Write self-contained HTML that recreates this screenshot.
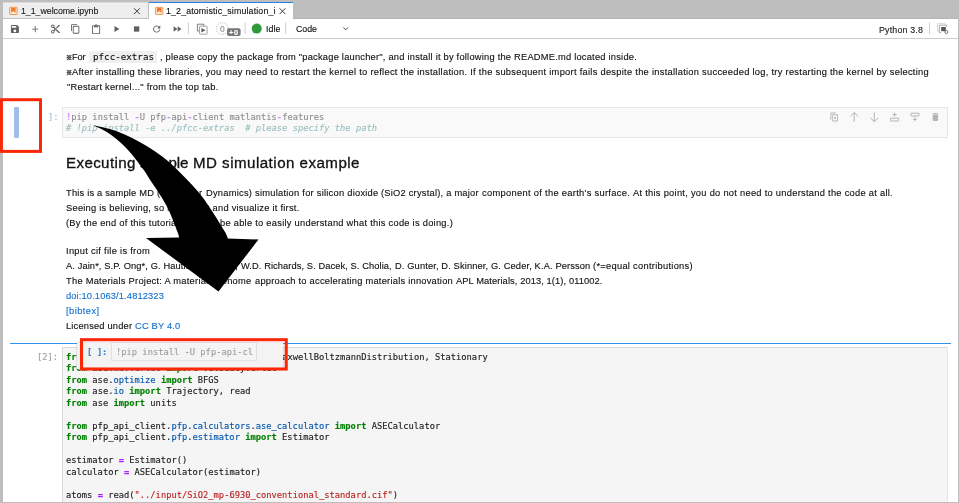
<!DOCTYPE html>
<html lang="en">
<head>
<meta charset="utf-8">
<title>JupyterLab - drag cell</title>
<style>
html,body{margin:0;padding:0;}
body{width:959px;height:503px;overflow:hidden;background:#bebebe;position:relative;font-family:"Liberation Sans",sans-serif;}
.abs{position:absolute;}
.t{position:absolute;white-space:pre;line-height:1.2;z-index:2;will-change:transform;-webkit-text-stroke:0.13px;}
.m{font-family:"DejaVu Sans Mono","Liberation Mono",monospace;}
.cj{font-family:"Liberation Sans","Noto Sans CJK JP",sans-serif;}
.k{color:#008000;font-weight:bold;}
.o{color:#aa22ff;font-weight:bold;}
.p{color:#0055aa;}
.s{color:#ba2121;}
.top{z-index:7;}
#tabbar{left:0;top:0;width:959px;height:19px;background:#bebebe;}
#tab1{left:2.8px;top:2.2px;width:145.7px;height:16px;background:#eeeeee;border-top:0.7px solid #dadada;box-sizing:border-box;}
#tab2{left:148.7px;top:2.2px;width:144.4px;height:17px;background:#fff;border-top:1.1px solid #2f7fe0;box-sizing:border-box;}
#toolbar{left:2.8px;top:18.7px;width:955.2px;height:19.2px;background:#fff;border-bottom:0.8px solid #cdcdcd;box-sizing:content-box;}
#content{left:2.8px;top:38.7px;width:955.2px;height:463.1px;background:#fff;}
</style>
</head>
<body>
<div class="abs" id="tabbar"></div>
<div class="abs" id="tab1"></div>
<div class="abs" id="tab2"></div>
<div class="abs" id="toolbar"></div>
<div class="abs" style="left:2.8px;top:18px;width:146px;height:0.8px;background:#c2c2c2;"></div>
<div class="abs" style="left:293.1px;top:17.8px;width:665px;height:0.8px;background:#b4b4b4;"></div>
<div class="abs" id="content"></div>

<!-- faded (dragged) cell -->
<div class="abs" style="left:13.5px;top:106.8px;width:5.6px;height:31.1px;background:#a0bee8;border-radius:1.2px;"></div>
<div class="abs" style="left:62.1px;top:106.9px;width:885.8px;height:30.8px;background:#f9f9f9;border:0.8px solid #e6e6e6;box-sizing:border-box;"></div>
<!-- inline code bg -->
<div class="abs" style="left:88.7px;top:51.2px;width:68.8px;height:12.2px;background:#efefef;"></div>

<!-- drop target line -->
<div class="abs" style="left:10px;top:342.8px;width:941px;height:1.3px;background:#3390f0;"></div>

<!-- code cell 2 -->
<div class="abs" style="left:62.1px;top:347px;width:885.5px;height:154.8px;background:#f5f5f5;border:0.9px solid #d8d8d8;border-bottom:none;border-right:0.7px solid #e6e6e6;box-sizing:border-box;"></div>

<!-- drag image -->
<div class="abs" style="left:76.6px;top:342.7px;width:206.5px;height:26.5px;background:#f3f3f3;z-index:5;box-shadow:0 0 1.5px rgba(0,0,0,0.3);"></div>
<div class="abs" style="left:111.2px;top:342.1px;width:145.7px;height:19.2px;background:#f4f4f4;border:0.9px solid #e0e0e0;box-sizing:border-box;z-index:6;"></div>

<div class="t" style="left:21.2px;top:6px;font-size:8.8px;color:#1a1a1a;letter-spacing:-0.0274px;">1_1_welcome.ipynb</div>
<div class="t" style="left:166.3px;top:6px;font-size:8.8px;color:#111;letter-spacing:0.1529px;">1_2_atomistic_simulation_i</div>
<div class="t" style="left:265.9px;top:24px;font-size:8.8px;color:#111;letter-spacing:0.0531px;">Idle</div>
<div class="t" style="left:296.3px;top:24px;font-size:8.8px;color:#111;letter-spacing:-0.0078px;">Code</div>
<div class="t" style="left:879.1px;top:25px;font-size:8.8px;color:#222;letter-spacing:0.1938px;">Python 3.8</div>
<div class="t" style="left:219.9px;top:24px;font-size:8.4px;color:#909090;">0</div>
<div class="t" style="left:229.0px;top:29px;font-size:7.4px;color:#fff;letter-spacing:0.7812px;font-weight:bold;">+0</div>
<div class="t cj" style="left:65.9px;top:54px;font-size:6.2px;color:#111;font-weight:bold;-webkit-text-stroke:0.3px;">※</div>
<div class="t" style="left:71.6px;top:52px;font-size:9.3px;color:#111;letter-spacing:-0.1177px;">For</div>
<div class="t m" style="left:92.7px;top:51px;font-size:9.17px;color:#111;letter-spacing:0.0327px;">pfcc-extras</div>
<div class="t" style="left:159.5px;top:52px;font-size:9.3px;color:#111;letter-spacing:0.2260px;">, please copy the package from "package launcher", and install it by following the README.md located inside.</div>
<div class="t cj" style="left:65.9px;top:69px;font-size:6.2px;color:#111;font-weight:bold;-webkit-text-stroke:0.3px;">※</div>
<div class="t" style="left:71.6px;top:67px;font-size:9.3px;color:#111;letter-spacing:0.2830px;">After installing these libraries, you may need to restart the kernel to reflect the installation. If the subsequent import fails despite the installation succeeded log, try restarting the kernel by selecting</div>
<div class="t" style="left:67.0px;top:82px;font-size:9.3px;color:#111;letter-spacing:0.2432px;">"Restart kernel..." from the top tab.</div>
<div class="t m" style="left:47.6px;top:112px;font-size:8.76px;color:#a9c1e4;letter-spacing:-0.1234px;">]:</div>
<div class="t m" style="left:66.25px;top:112px;font-size:8.76px;color:#8e8e8e;letter-spacing:0.0013px;"><span style="color:#d28cff;font-weight:bold">!</span>pip install <span style="color:#d28cff;font-weight:bold">-</span>U pfp<span style="color:#d28cff;font-weight:bold">-</span>api<span style="color:#d28cff;font-weight:bold">-</span>client matlantis<span style="color:#d28cff;font-weight:bold">-</span>features</div>
<div class="t m" style="left:66.25px;top:123px;font-size:8.76px;color:#9cc0c0;letter-spacing:0.0032px;font-style:italic;"># !pip install -e ../pfcc-extras  # please specify the path</div>
<div class="t" style="left:66.3px;top:154px;font-size:15.1px;color:#111;letter-spacing:0.3892px;-webkit-text-stroke:0.32px;">Executing</div>
<div class="t" style="left:140.3px;top:154px;font-size:15.1px;color:#111;letter-spacing:-0.0453px;-webkit-text-stroke:0.32px;">sample</div>
<div class="t" style="left:192.8px;top:154px;font-size:15.1px;color:#111;letter-spacing:0.4821px;-webkit-text-stroke:0.32px;">MD simulation example</div>
<div class="t" style="left:66.4px;top:188px;font-size:9.3px;color:#111;letter-spacing:0.2071px;">This is a sample MD (Molecular </div>
<div class="t" style="left:205.6px;top:188px;font-size:9.3px;color:#111;letter-spacing:0.2554px;">Dynamics) simulation for silicon dioxide </div>
<div class="t" style="left:380.9px;top:188px;font-size:9.3px;color:#111;letter-spacing:0.2307px;">(SiO2 crystal), a major </div>
<div class="t" style="left:481.5px;top:188px;font-size:9.3px;color:#111;letter-spacing:0.3153px;">component of the earth's surface. </div>
<div class="t" style="left:632.5px;top:188px;font-size:9.3px;color:#111;letter-spacing:0.2797px;">At this point, you do not need to understand the code at all.</div>
<div class="t" style="left:66.4px;top:203px;font-size:9.3px;color:#111;letter-spacing:0.2534px;">Seeing is believing, so let's run it and visualize it first.</div>
<div class="t" style="left:66.4px;top:218px;font-size:9.3px;color:#111;letter-spacing:0.2660px;">(By the end of this tutorial, you will be able to easily understand what this code is doing.)</div>
<div class="t" style="left:66.4px;top:246px;font-size:9.3px;color:#111;letter-spacing:0.2955px;">Input cif file is from</div>
<div class="t" style="left:66.4px;top:261px;font-size:9.3px;color:#111;letter-spacing:0.1033px;">A. Jain*, S.P. Ong*, G. Hautier, W. Chen, </div>
<div class="t" style="left:241.1px;top:261px;font-size:9.3px;color:#111;letter-spacing:0.0845px;">W.D. Richards, S. Dacek, S. Cholia, </div>
<div class="t" style="left:394.5px;top:261px;font-size:9.3px;color:#111;letter-spacing:0.1275px;">D. Gunter, D. Skinner, G. Ceder, K.A. Persson </div>
<div class="t" style="left:592.6px;top:261px;font-size:9.3px;color:#111;letter-spacing:0.2871px;">(*=equal contributions)</div>
<div class="t" style="left:66.4px;top:276px;font-size:9.3px;color:#111;letter-spacing:0.2631px;">The Materials Project: A materials genome </div>
<div class="t" style="left:254.7px;top:276px;font-size:9.3px;color:#111;letter-spacing:0.2419px;">approach to accelerating materials innovation </div>
<div class="t" style="left:455.5px;top:276px;font-size:9.3px;color:#111;letter-spacing:0.0983px;">APL Materials, 2013, 1(1), 011002.</div>
<div class="t" style="left:66.4px;top:291px;font-size:9.3px;color:#1470d0;letter-spacing:0.1362px;">doi:10.1063/1.4812323</div>
<div class="t" style="left:66.4px;top:306px;font-size:9.3px;color:#1470d0;letter-spacing:0.4395px;">[bibtex]</div>
<div class="t" style="left:66.4px;top:321px;font-size:9.3px;color:#111;letter-spacing:0.1901px;">Licensed under <span style="color:#1470d0">CC BY 4.0</span></div>
<div class="t m" style="left:36.6px;top:352px;font-size:8.76px;color:#a0a0a0;letter-spacing:0.0015px;">[2]:</div>
<div class="t m" style="left:66.25px;top:352px;font-size:8.76px;color:#1a1a1a;letter-spacing:0.0023px;"><span class="k">from</span> ase.<span class="p">md</span>.<span class="p">velocitydistribution</span> <span class="k">import</span> MaxwellBoltzmannDistribution, Stationary</div>
<div class="t m" style="left:66.25px;top:363px;font-size:8.76px;color:#1a1a1a;letter-spacing:0.0015px;"><span class="k">from</span> ase.<span class="p">md</span>.<span class="p">verlet</span> <span class="k">import</span> VelocityVerlet</div>
<div class="t m" style="left:66.25px;top:375px;font-size:8.76px;color:#1a1a1a;letter-spacing:0.0016px;"><span class="k">from</span> ase.<span class="p">optimize</span> <span class="k">import</span> BFGS</div>
<div class="t m" style="left:66.25px;top:386px;font-size:8.76px;color:#1a1a1a;letter-spacing:0.0018px;"><span class="k">from</span> ase.<span class="p">io</span> <span class="k">import</span> Trajectory, read</div>
<div class="t m" style="left:66.25px;top:398px;font-size:8.76px;color:#1a1a1a;letter-spacing:0.0024px;"><span class="k">from</span> ase <span class="k">import</span> units</div>
<div class="t m" style="left:66.25px;top:421px;font-size:8.76px;color:#1a1a1a;letter-spacing:0.0016px;"><span class="k">from</span> pfp_api_client.<span class="p">pfp</span>.<span class="p">calculators</span>.<span class="p">ase_calculator</span> <span class="k">import</span> ASECalculator</div>
<div class="t m" style="left:66.25px;top:432px;font-size:8.76px;color:#1a1a1a;letter-spacing:0.0016px;"><span class="k">from</span> pfp_api_client.<span class="p">pfp</span>.<span class="p">estimator</span> <span class="k">import</span> Estimator</div>
<div class="t m" style="left:66.25px;top:455px;font-size:8.76px;color:#1a1a1a;letter-spacing:0.0020px;">estimator <span class="o">=</span> Estimator()</div>
<div class="t m" style="left:66.25px;top:467px;font-size:8.76px;color:#1a1a1a;letter-spacing:0.0024px;">calculator <span class="o">=</span> ASECalculator(estimator)</div>
<div class="t m" style="left:66.25px;top:490px;font-size:8.76px;color:#1a1a1a;letter-spacing:0.0024px;">atoms <span class="o">=</span> read(<span class="s">"../input/SiO2_mp-6930_conventional_standard.cif"</span>)</div>
<div class="t m top" style="left:87px;top:347px;font-size:8.76px;color:#3b82c4;letter-spacing:-0.2485px;font-weight:bold;">[ ]:</div>
<div class="t m top" style="left:115.5px;top:347px;font-size:8.76px;color:#9e9e9e;letter-spacing:0.0030px;">!pip install -U pfp-api-cl</div>

<!-- icons / overlays -->
<svg class="abs" style="left:0;top:0;z-index:1;" width="959" height="503" viewBox="0 0 959 503">
<g transform="translate(9.55,23.75) scale(0.4458)" fill="#616161"><path d="M17 3H5c-1.11 0-2 .9-2 2v14c0 1.1.89 2 2 2h14c1.1 0 2-.9 2-2V7l-4-4zm-5 16c-1.66 0-3-1.34-3-3s1.34-3 3-3 3 1.34 3 3-1.34 3-3 3zm3-10H5V5h10v4z"/></g>
<g transform="translate(29.85,23.75) scale(0.4458)" fill="#616161"><path d="M19 13h-6v6h-2v-6H5v-2h6V5h2v6h6v2z"/></g>
<g transform="translate(50.15,23.65) scale(0.4458)" fill="#616161"><path d="M9.64 7.64c.23-.5.36-1.05.36-1.64 0-2.21-1.79-4-4-4S2 3.79 2 6s1.79 4 4 4c.59 0 1.14-.13 1.64-.36L10 12l-2.36 2.36C7.14 14.13 6.59 14 6 14c-2.21 0-4 1.79-4 4s1.79 4 4 4 4-1.79 4-4c0-.59-.13-1.14-.36-1.64L12 14l7 7h3v-1L9.64 7.64zM6 8c-1.1 0-2-.89-2-2s.9-2 2-2 2 .89 2 2-.9 2-2 2zm0 12c-1.1 0-2-.89-2-2s.9-2 2-2 2 .89 2 2-.9 2-2 2zm6-7.5c-.28 0-.5-.22-.5-.5s.22-.5.5-.5.5.22.5.5-.22.5-.5.5zM19 3l-6 6 2 2 7-7V3z"/></g>
<g transform="translate(70.05,23.55) scale(0.5944)" fill="#616161"><path d="M11.9,1H3.2C2.4,1,1.7,1.7,1.7,2.5v10.2h1.5V2.5h8.7V1z M14.1,3.9h-8c-0.8,0-1.5,0.7-1.5,1.5v10.2c0,0.8,0.7,1.5,1.5,1.5h8 c0.8,0,1.5-0.7,1.5-1.5V5.4C15.5,4.6,14.9,3.9,14.1,3.9z M14.1,15.5h-8V5.4h8V15.5z"/></g>
<g transform="translate(90.75,24.25) scale(0.4458)" fill="#616161"><path d="M19 2h-4.18C14.4.84 13.3 0 12 0c-1.3 0-2.4.84-2.82 2H5c-1.1 0-2 .9-2 2v16c0 1.1.9 2 2 2h14c1.1 0 2-.9 2-2V4c0-1.1-.9-2-2-2zm-7 0c.55 0 1 .45 1 1s-.45 1-1 1-1-.45-1-1 .45-1 1-1zm7 18H5V4h2v3h10V4h2v16z"/></g>
<g transform="translate(110.95,23.65) scale(0.4458)" fill="#616161"><path d="M8 5v14l11-7z"/></g>
<g transform="translate(131.25,23.65) scale(0.4458)" fill="#616161"><path d="M6 6h12v12H6z"/></g>
<g transform="translate(151.35,23.65) scale(0.5944)" fill="#616161"><path d="M9 13.5c-2.49 0-4.5-2.01-4.5-4.5S6.51 4.5 9 4.5c1.24 0 2.36.52 3.17 1.33L10 8h5V3l-1.76 1.76C12.15 3.68 10.66 3 9 3 5.69 3 3.01 5.69 3.01 9S5.69 15 9 15c2.97 0 5.43-2.16 5.9-5h-1.52c-.46 2-2.24 3.5-4.38 3.5z"/></g>
<g transform="translate(171.85,23.65) scale(0.4458)" fill="#616161"><path d="M4 18l8.5-6L4 6v12zm9-12v12l8.5-6L13 6z"/></g>
<rect x="187.9" y="22.5" width="0.9" height="11.5" fill="#c9c9c9"/>
<rect x="244.6" y="22.5" width="0.9" height="11.5" fill="#c9c9c9"/>
<rect x="285.20000000000005" y="22.5" width="0.9" height="11.5" fill="#c9c9c9"/>
<rect x="929.1" y="22.5" width="0.9" height="11.5" fill="#c9c9c9"/>
<g fill="none" stroke-width="0.9"><path d="M199.3,31.0 H197.4 V24.2 H203.8 V25.9" stroke="#707070"/><rect x="199.5" y="26.2" width="7.6" height="8.0" rx="0.5" stroke="#9a9a9a"/></g><path d="M201.4,28.0 L205.6,30.2 L201.4,32.4 Z" fill="#606060"/>
<circle cx="222.2" cy="28.6" r="5.9" fill="none" stroke="#8c8c8c" stroke-width="0.85" stroke-dasharray="0.85 1.62"/>
<rect x="227" y="28.2" width="13.6" height="7.9" rx="2" fill="#777"/>
<circle cx="256.7" cy="28.6" r="5" fill="#2f9a3c"/>
<path d="M343.4,27.5 L345.6,29.8 L347.8,27.5" fill="none" stroke="#444" stroke-width="1"/>
<path d="M134.0,8.3 L139.8,14.1 M139.8,8.3 L134.0,14.1" stroke="#3c3c3c" stroke-width="1.0" fill="none"/>
<path d="M279.6,8.3 L285.4,14.1 M285.4,8.3 L279.6,14.1" stroke="#3c3c3c" stroke-width="1.0" fill="none"/>
<g><rect x="9.649999999999999" y="7.35" width="7.4" height="7.2" rx="0.7" fill="#fbeadc" stroke="#f08a3e" stroke-width="0.9"/><path d="M11.1,8.1 H15.6 V12.7 L13.35,11.0 L11.1,12.7 Z" fill="#f37726"/></g>
<g><rect x="155.45" y="7.35" width="7.4" height="7.2" rx="0.7" fill="#fbeadc" stroke="#f08a3e" stroke-width="0.9"/><path d="M156.9,8.1 H161.4 V12.7 L159.15,11.0 L156.9,12.7 Z" fill="#f37726"/></g>
<g fill="none" stroke-width="0.8"><path d="M939.2,31 H937.5 V23.6 H945 V25" stroke="#cfcfcf"/><path d="M941,32.6 H939.3 V25.2 H946.6 V27" stroke="#9a9a9a"/></g><rect x="941.2" y="27" width="4.6" height="4.2" fill="#555"/><circle cx="946.3" cy="32" r="1.5" fill="#fff" stroke="#555" stroke-width="0.8"/>
<g transform="translate(828.65,111.65) scale(0.4458)" fill="#b4b4b4"><path d="M6 2h10v2H6v14H4V4c0-1.1.9-2 2-2zm4 4h9c1.1 0 2 .9 2 2v12c0 1.1-.9 2-2 2h-9c-1.1 0-2-.9-2-2V8c0-1.1.9-2 2-2zm0 2v12h9V8h-9zm2.5 4h4v4h-4z"/></g>
<path d="M854.2,121.8 V112.6 M850.3,116.4 L854.2,112.5 L858.1,116.4" fill="none" stroke="#b4b4b4" stroke-width="1"/>
<path d="M874.3,112.4 V121.6 M870.4,117.8 L874.3,121.7 L878.2,117.8" fill="none" stroke="#b4b4b4" stroke-width="1"/>
<g fill="none" stroke="#b4b4b4" stroke-width="1"><rect x="890.6" y="118.2" width="8" height="2.8" rx="0.4"/><path d="M894.6,112.7 V116.6 M892.6,114.6 H896.6"/></g>
<g fill="none" stroke="#b4b4b4" stroke-width="1"><rect x="910.9" y="113.2" width="8" height="2.8" rx="0.4"/><path d="M914.9,117.4 V121.3 M912.9,119.4 H916.9"/></g>
<g transform="translate(930.05,111.65) scale(0.4458)" fill="#b4b4b4"><path d="M6 19c0 1.1.9 2 2 2h8c1.1 0 2-.9 2-2V7H6v12zM19 4h-3.500l-1-1h-5l-1 1H5v2h14V4z"/></g>
</svg>
<svg class="abs" style="left:0;top:0;z-index:8;" width="959" height="503" viewBox="0 0 959 503">
<path d="M92.7,124.9 C95.5,125.6 104.5,127.5 109.8,129.1 C115.1,130.7 119.7,132.4 124.7,134.6 C129.7,136.8 134.6,139.4 139.6,142.1 C144.6,144.8 149.5,147.7 154.5,151.0 C159.5,154.3 165.2,158.6 169.4,162.2 C173.7,165.8 176.5,169.0 180.0,172.5 C183.5,176.0 186.9,179.4 190.5,183.3 C194.1,187.2 198.3,191.8 201.6,196.1 C204.9,200.3 207.5,204.3 210.5,208.8 C213.5,213.3 217.0,218.9 219.5,222.9 C222.0,226.9 224.0,230.0 225.4,232.6 C226.8,235.2 227.5,237.6 227.9,238.6 L258.5,239.5 L218.5,291.6 L146,238 L179.2,237.6 C178.9,236.8 178.7,235.4 177.7,232.6 C176.7,229.8 174.9,224.9 173.2,220.7 C171.5,216.5 169.5,211.7 167.3,207.3 C165.1,202.9 162.3,198.6 159.8,194.5 C157.3,190.4 154.2,186.0 152.2,183.0 C150.2,180.0 149.3,178.6 148.0,176.5 C146.7,174.4 145.6,172.5 144.2,170.5 C142.8,168.5 141.6,167.0 139.6,164.4 C137.6,161.8 134.7,157.7 132.2,154.7 C129.7,151.7 127.2,149.0 124.7,146.5 C122.2,144.0 119.8,141.9 117.3,139.8 C114.8,137.7 112.3,135.6 109.8,133.9 C107.3,132.2 105.2,130.9 102.4,129.4 C99.6,127.9 94.3,125.7 92.7,124.9 Z" fill="#000"/>
<rect x="1.4" y="99.7" width="39.1" height="51.7" fill="none" stroke="#fb2706" stroke-width="3"/>
<rect x="81.5" y="339.7" width="204.75" height="29.3" fill="none" stroke="#fb2706" stroke-width="3.05"/>
</svg>
</body>
</html>
